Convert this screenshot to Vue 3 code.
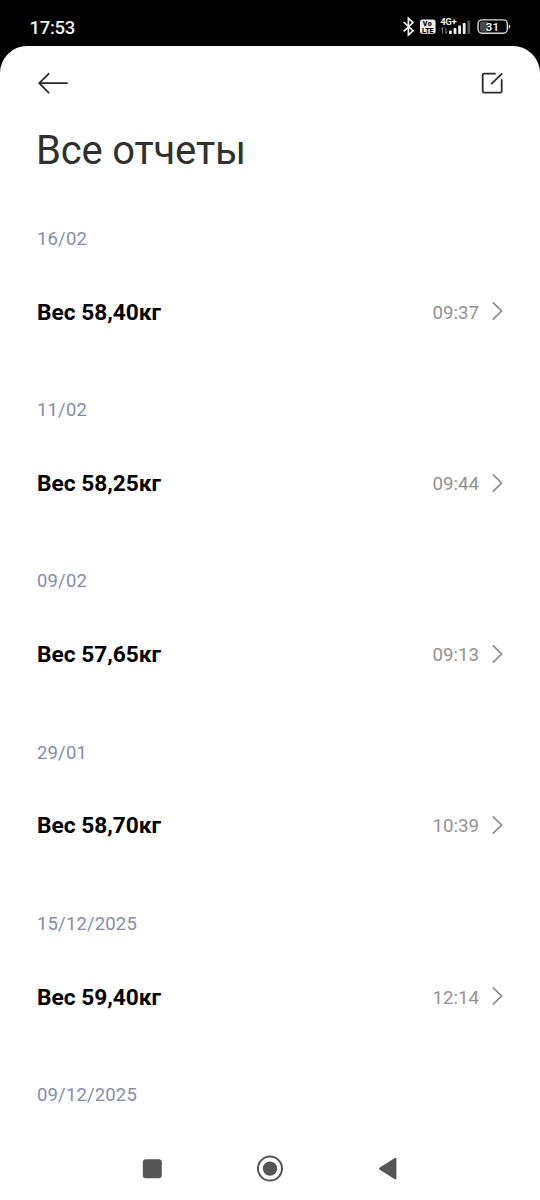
<template>
  <div class="screen">
    <header class="status-bar">
      <span class="clock">17:53</span>
      <svg class="status-icons" width="112" height="24" viewBox="0 0 112 24">
        <!-- bluetooth -->
        <path class="bt" d="M3.6 7 13 15.7 8.4 20V3.2L13 7.6 3.6 16.3" />
        <!-- volte -->
        <rect x="20" y="4.6" width="15.6" height="14.2" rx="2.5" fill="#eee" />
        <text class="volte" x="27.2" y="11.2" textLength="9">Vo</text>
        <text class="volte" x="27.8" y="17.6" textLength="11.5" lengthAdjust="spacingAndGlyphs">LTE</text>
        <!-- signal -->
        <text class="net" x="40.2" y="10" textLength="16.5">4G+</text>
        <path d="M42.5 12.5V18.5M41 14.5 42.5 12.5M45.8 12.5V18.5M45.8 18.5 47.2 16.5" stroke="#777" stroke-width="1" fill="none" />
        <rect
          v-for="bar in bars"
          :key="bar.x"
          :x="bar.x"
          :y="19 - bar.h"
          width="2.8"
          :height="bar.h"
          rx="0.8"
          :fill="bar.color"
        />
        <!-- battery -->
        <rect x="80" y="6.4" width="8.5" height="10.4" rx="2" fill="#484848" />
        <rect x="78.1" y="4.9" width="29.2" height="13.4" rx="4" fill="none" stroke="#ddd" stroke-width="1.4" />
        <path d="M109.2 9.8q1.8 1.7 0 3.6z" fill="#ddd" stroke="#ddd" stroke-width="0.8" />
        <text class="battery" x="92.4" y="15.8">31</text>
      </svg>
    </header>

    <main class="sheet">
      <div class="toolbar">
        <button type="button" class="icon-btn" aria-label="Назад">
          <svg width="32" height="24" viewBox="0 0 32 24">
            <path d="M11.6 2.8 2.2 12.2 11.6 21.6M2.4 12.2H30" />
          </svg>
        </button>
        <button type="button" class="icon-btn" aria-label="Изменить">
          <svg width="24" height="24" viewBox="0 0 24 24">
            <path d="M15 2.7H4.2Q2.7 2.7 2.7 4.2V20.2Q2.7 21.7 4.2 21.7H20.2Q21.7 21.7 21.7 20.2V9M11.7 12.6 21.7 2.8" />
          </svg>
        </button>
      </div>

      <h1 class="title">Все отчеты</h1>

      <section v-for="report in reports" :key="report.date" class="report">
        <div class="date">{{ report.date }}</div>
        <div v-if="report.weight" class="row">
          <span class="weight">Вес {{ report.weight }}кг</span>
          <span class="time">{{ report.time }}</span>
          <svg class="chevron" width="12" height="20" viewBox="0 0 12 20">
            <path d="M0.8 1.3 9.6 10 0.8 18.7" />
          </svg>
        </div>
      </section>
    </main>

    <nav class="nav-bar">
      <svg width="28" height="28" viewBox="0 0 28 28">
        <rect x="4.8" y="4.2" width="19" height="19" rx="3" />
      </svg>
      <svg width="28" height="28" viewBox="0 0 28 28">
        <circle cx="14" cy="13.6" r="12" fill="none" stroke="#555" stroke-width="2" />
        <circle cx="14" cy="13.6" r="7.2" />
      </svg>
      <svg width="28" height="28" viewBox="0 0 28 28">
        <path d="M6 13.6 21.4 3.8V23.4Z" stroke="#555" stroke-width="2" stroke-linejoin="round" />
      </svg>
    </nav>
  </div>
</template>

<script setup>
const bars = [
  { x: 49, h: 3.5, color: '#eee' },
  { x: 53.6, h: 6, color: '#eee' },
  { x: 58.2, h: 8.5, color: '#eee' },
  { x: 62.8, h: 11, color: '#eee' },
  { x: 67.4, h: 13.5, color: '#555' },
];

const reports = [
  { date: '16/02', weight: '58,40', time: '09:37' },
  { date: '11/02', weight: '58,25', time: '09:44' },
  { date: '09/02', weight: '57,65', time: '09:13' },
  { date: '29/01', weight: '58,70', time: '10:39' },
  { date: '15/12/2025', weight: '59,40', time: '12:14' },
  { date: '09/12/2025' },
];
</script>

<style>
body {
  margin: 0;
  background: #000;
}
</style>

<style scoped>
.screen {
  display: flex;
  flex-direction: column;
  width: 540px;
  height: 1200px;
  overflow: hidden;
  background: #000;
  font-family: Roboto, "Liberation Sans", sans-serif;
}

.status-bar {
  display: flex;
  flex: none;
  align-items: center;
  justify-content: space-between;
  box-sizing: border-box;
  height: 46px;
  padding: 8px 28px 0 29.5px;
}
.clock {
  padding-top: 2px;
  color: #f2f2f2;
  font-size: 18.5px;
  font-weight: 500;
  line-height: 22px;
  letter-spacing: -0.3px;
}
.status-icons { display: block; }
.bt { fill: none; stroke: #eee; stroke-width: 1.7; }
.volte { font-size: 7px; font-weight: 900; text-anchor: middle; fill: #000; }
.net { font-size: 9.6px; font-weight: 700; fill: #eee; }
.battery { font-size: 11.5px; font-weight: 500; text-anchor: middle; fill: #fff; }

.sheet {
  flex: 1;
  min-height: 0;
  overflow: hidden;
  padding: 0 36px 0 37px;
  border-radius: 27px 27px 0 0;
  background: #fff;
}
.toolbar {
  display: flex;
  align-items: center;
  justify-content: space-between;
  height: 74px;
}
.icon-btn {
  display: block;
  padding: 0;
  border: none;
  background: none;
}
.icon-btn svg {
  display: block;
  fill: none;
  stroke: #2b2b2b;
  stroke-width: 1.8;
  stroke-linecap: round;
  stroke-linejoin: round;
}
.title {
  margin: 7px 0 51px -1px;
  color: #303030;
  font-size: 40px;
  font-weight: 400;
  line-height: 48px;
  letter-spacing: -0.18px;
}

.report { height: 171.2px; }
.date {
  color: #868ca8;
  font-size: 18.5px;
  line-height: 26px;
  letter-spacing: 0.15px;
}
.row {
  display: flex;
  align-items: center;
  height: 28px;
  margin-top: 46.4px;
}
.weight {
  flex: 1;
  color: #000;
  font-size: 22.7px;
  font-weight: 700;
}
.time {
  padding-top: 1px;
  color: #929292;
  font-size: 18.7px;
}
.chevron {
  margin: -2px 0 0 13px;
  fill: none;
  stroke: #8c8c8c;
  stroke-width: 1.7;
}

.nav-bar {
  display: flex;
  flex: none;
  align-items: center;
  justify-content: space-between;
  box-sizing: border-box;
  height: 64px;
  padding: 1px 138px 0;
  background: #fff;
}
.nav-bar svg { fill: #555; }
</style>
